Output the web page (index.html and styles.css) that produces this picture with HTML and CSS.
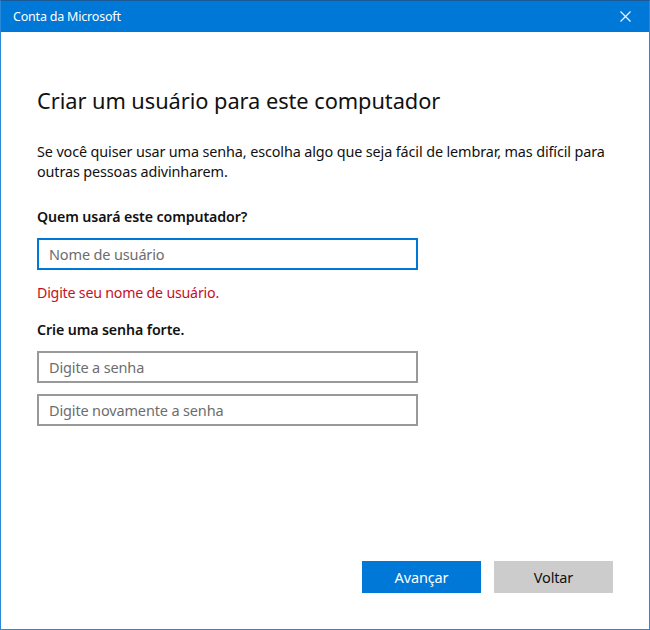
FILE: index.html
```html
<!DOCTYPE html>
<html lang="pt-BR">
<head>
<meta charset="utf-8">
<link rel="stylesheet" href="styles.css">
</head>
<body>
<div class="window">
  <div class="titlebar">
    <span class="title">Conta da Microsoft</span>
    <svg class="close" width="11" height="11" viewBox="0 0 11 11"><path d="M0.5 0.5 L10.5 10.5 M10.5 0.5 L0.5 10.5" stroke="#fff" stroke-width="1.1" fill="none"/></svg>
  </div>
  <div class="content">
    <h1 class="heading">Criar um usuário para este computador</h1>
    <p class="desc">Se você quiser usar uma senha, escolha algo que seja fácil de lembrar, mas difícil para outras pessoas adivinharem.</p>
    <div class="label">Quem usará este computador?</div>
    <div class="field focused">Nome de usuário</div>
    <div class="error">Digite seu nome de usuário.</div>
    <div class="label label2">Crie uma senha forte.</div>
    <div class="field field2">Digite a senha</div>
    <div class="field field3">Digite novamente a senha</div>
    <div class="spacer"></div>
    <div class="buttons">
      <div class="btn primary">Avançar</div>
      <div class="btn secondary">Voltar</div>
    </div>
  </div>
</div>
</body>
</html>
```
FILE: styles.css
```css
html, body { margin: 0; padding: 0; }
body {
  width: 650px;
  height: 630px;
  font-family: "Noto Sans", "Open Sans", sans-serif;
  background: #fff;
}
.window {
  box-sizing: border-box;
  width: 650px;
  height: 630px;
  border: 1px solid #2b88d8;
  border-top: 1px solid #1a5a96;
  display: flex;
  flex-direction: column;
}
.titlebar {
  height: 31px;
  background: #0078d7;
  display: flex;
  align-items: center;
  justify-content: space-between;
  padding: 0 18px 0 12px;
  color: #fff;
}
.title { font-size: 12.5px; letter-spacing: -0.2px; }
.close { display: block; }
.content {
  flex: 1;
  display: flex;
  flex-direction: column;
  padding: 0 36px 36px 36px;
}
.heading {
  margin: 54px 0 0 0;
  font-weight: normal;
  font-size: 21.8px;
  line-height: 30px;
  color: #111;
  letter-spacing: -0.05px;
}
.desc {
  margin: 26px 0 0 0;
  font-size: 14.4px;
  line-height: 20px;
  color: #111;
  letter-spacing: -0.12px;
}
.label {
  margin-top: 25px;
  font-size: 14.2px;
  font-weight: 600;
  line-height: 20px;
  color: #111;
  letter-spacing: -0.1px;
}
.label2 { margin-top: 17px; }
.field {
  box-sizing: border-box;
  width: 381px;
  height: 32px;
  margin-top: 12px;
  border: 2px solid #999;
  padding: 0 10px;
  display: flex;
  align-items: center;
  font-size: 14.5px;
  color: #6d6d6d;
  letter-spacing: -0.15px;
}
.field.focused { border-color: #0078d7; margin-top: 11px; }
.field2 { margin-top: 11px; }
.field3 { margin-top: 11px; }
.error {
  margin-top: 13px;
  font-size: 14.2px;
  line-height: 20px;
  color: #c50f1f;
  letter-spacing: -0.2px;
}
.spacer { flex: 1; }
.buttons {
  display: flex;
  justify-content: flex-end;
  gap: 13px;
}
.btn {
  width: 119px;
  height: 32px;
  display: flex;
  align-items: center;
  justify-content: center;
  font-size: 14.5px;
  letter-spacing: -0.15px;
}
.primary { background: #0078d7; color: #fff; }
.secondary { background: #cccccc; color: #111; }
```
